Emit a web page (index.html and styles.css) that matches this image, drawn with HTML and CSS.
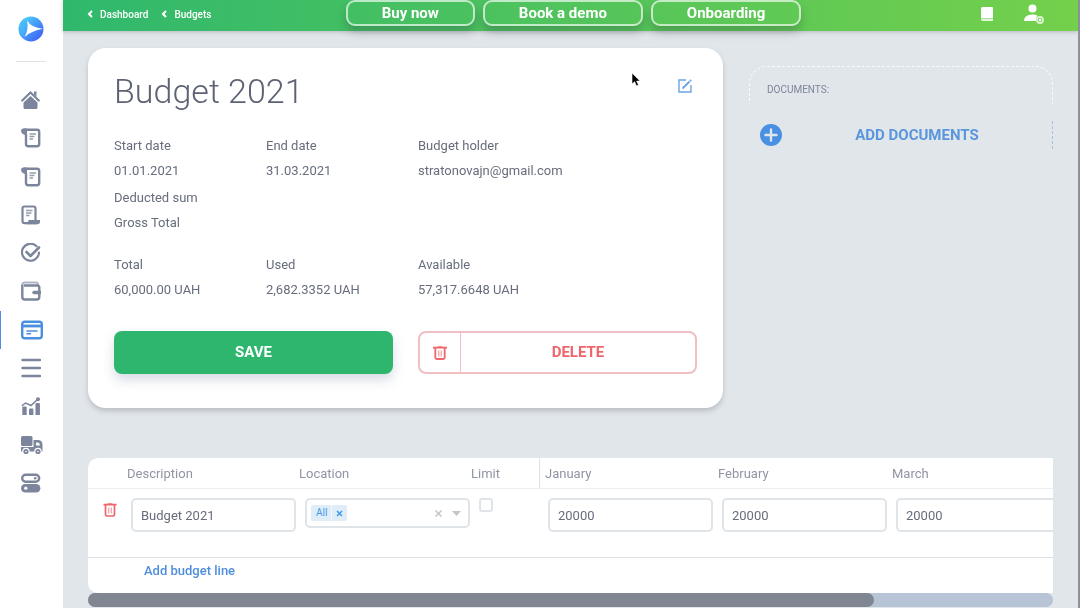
FILE: index.html
```html
<!DOCTYPE html>
<html lang="en">
<head>
  <meta charset="UTF-8" />
  <meta name="viewport" content="width=device-width, initial-scale=1.0"/>
  <title>Budget 2021</title>
  <link rel="stylesheet" href="styles.css">
</head>
<body>

<aside class="sidebar">
  <a href="#" class="logo" aria-label="Home page">
    <svg width="26" height="26" viewBox="0 0 26 26">
      <defs>
        <linearGradient id="logoFill" x1="0" y1="0" x2="1" y2="1">
          <stop offset="0.2" stop-color="#4cc6fb"/>
          <stop offset="0.8" stop-color="#3f6df6"/>
        </linearGradient>
      </defs>
      <circle cx="13" cy="13" r="12.5" fill="url(#logoFill)"/>
      <path d="M9 4.500L6 21L1.500 18Q-1 9 5 3.500z" fill="#45b4fa" opacity=".5"/>
      <path d="M9 4.500Q13 11.500 25 12.800Q13 15 6.500 21Q11 13 9 4.500z" fill="#fff"/>
    </svg>
  </a>

  <nav class="side-nav">
    <a href="#" aria-label="Dashboard">
      <svg width="20" height="20" viewBox="0 0 20 20">
        <path d="M1.200 10.500L9.500 2.500l8.300 8" fill="none" stroke="currentColor" stroke-width="2.200" stroke-linecap="round"/>
        <path d="M13 1.500h2.500v5L13 4.500zM9.500 6l7 6.500v5q0 1.500-1.500 1.500H4q-1.500 0-1.500-1.500v-5z" fill="currentColor"/>
      </svg>
    </a>
    <a href="#" aria-label="Requests">
      <svg width="20" height="20" viewBox="0 0 20 20" fill="none" stroke="currentColor">
        <path d="M2.500 1.800h13.500q2.200 0 2.200 2.200v12q0 2.200-2.200 2.200H7.200Q5 18.200 5 16V6" stroke-width="2.400"/>
        <path d="M0 3Q0 .6 2.500.6H6V7H3.800L.8 5.200z" fill="currentColor" stroke="none"/>
        <path d="M8.500 6h6.500M8.500 8.500h5M8.500 11h3.500" stroke-width="1.300" opacity=".8"/>
      </svg>
    </a>
    <a href="#" aria-label="Orders">
      <svg width="20" height="20" viewBox="0 0 20 20" fill="none" stroke="currentColor">
        <path d="M2.500 1.800h13.500q2.200 0 2.200 2.200v12q0 2.200-2.200 2.200H7.200Q5 18.200 5 16V6" stroke-width="2.400"/>
        <path d="M0 3Q0 .6 2.500.6H6V7H3.800L.8 5.200z" fill="currentColor" stroke="none"/>
        <path d="M8.500 6h6.500M8.500 8.500h5M8.500 11h3.500" stroke-width="1.300" opacity=".8"/>
      </svg>
    </a>
    <a href="#" aria-label="Invoices">
      <svg width="20" height="20" viewBox="0 0 20 20" fill="none" stroke="currentColor">
        <path d="M14.500 15V3.500Q14.500 1.500 12.500 1.500H3.500q-2 0-2 2v12.500q0 2.200 2.200 2.200H16" stroke-width="2.200"/>
        <path d="M7.500 15H19v1.500q0 2.800-2.500 2.800H5.500q2-1 2-4.300z" fill="currentColor" stroke="none"/>
        <path d="M5 5.500h6.500M5 8h5.500M5 10.500h3.500" stroke-width="1.300" opacity=".8"/>
      </svg>
    </a>
    <a href="#" aria-label="Approvals">
      <svg width="20" height="20" viewBox="0 0 20 20" fill="none" stroke="currentColor" stroke-linecap="round" stroke-linejoin="round">
        <path d="M15.500 3.200A8.500 8.500 0 1 0 18 9.500" stroke-width="2.200"/>
        <path d="M5.500 9l4 4 8.500-8.500" stroke-width="2.600"/>
      </svg>
    </a>
    <a href="#" aria-label="Wallet">
      <svg width="20" height="20" viewBox="0 0 20 20" fill="none" stroke="currentColor">
        <path d="M1.300 3.500v12.500q0 2.500 2.500 2.500h12q2.500 0 2.500-2.500V6.500q0-2-2-2H3" stroke-width="2.400"/>
        <path d="M1.500 3.500Q1.500 1.500 4 1.500h11.500q1.500 0 1.500 2.500" stroke-width="2" opacity=".6"/>
        <path d="M13 11.500h6" stroke-width="3.500" stroke-linecap="round"/>
      </svg>
    </a>
    <a href="#" class="active" aria-label="Budgets">
      <svg width="22" height="20" viewBox="0 0 22 20" fill="none" stroke="currentColor">
        <rect x="1.200" y="1.700" width="19.600" height="16.600" rx="2.500" stroke-width="2.400"/>
        <path d="M1 6h20" stroke-width="2.800"/>
        <path d="M6 11h10M6 13.800h3.500" stroke-width="1.600" stroke-linecap="round"/>
      </svg>
    </a>
    <a href="#" aria-label="Lists">
      <svg width="20" height="20" viewBox="0 0 20 20" fill="none" stroke="currentColor" stroke-width="2.400" stroke-linecap="round">
        <path d="M1.500 2h17.500M1.500 10h17.500M1.500 18h17.500"/>
      </svg>
    </a>
    <a href="#" aria-label="Analytics">
      <svg width="20" height="20" viewBox="0 0 20 20">
        <path d="M1.300 11.500q0-1 1-1h2.400q1 0 1 1V19H1.300zM8 13.500q0-1 1-1h2.400q1 0 1 1V19H8zM14.500 8q0-1 1-1h2.400q1 0 1 1v11h-4.400z" fill="currentColor"/>
        <path d="M.8 9.800L4.500 7l5.500 2.500L17 3" fill="none" stroke="currentColor" stroke-width="1.500"/>
        <circle cx="17" cy="3.300" r="2" fill="currentColor"/>
      </svg>
    </a>
    <a href="#" aria-label="Suppliers">
      <svg width="22" height="20" viewBox="0 0 22 20">
        <rect x="0" y="1" width="11.500" height="10" rx="1.500" fill="currentColor"/>
        <path d="M0 12h12.500V5h4.300q4.700 0 4.700 5v6.500H0z" fill="currentColor"/>
        <path d="M15 7.500h2q2 .5 2 3h-4z" fill="#fff"/>
        <g fill="currentColor" stroke="#fff" stroke-width="1.200">
          <circle cx="5" cy="16.500" r="3.200"/>
          <circle cx="17" cy="16.500" r="3.200"/>
        </g>
        <g fill="#fff"><circle cx="5" cy="16.500" r=".8"/><circle cx="17" cy="16.500" r=".8"/></g>
      </svg>
    </a>
    <a href="#" aria-label="Settings">
      <svg width="20" height="20" viewBox="0 0 20 20">
        <rect x="1.200" y="1.700" width="17" height="7" rx="3.500" fill="none" stroke="currentColor" stroke-width="2.400"/>
        <circle cx="14.200" cy="5.200" r="1.300" fill="currentColor"/>
        <rect x="0" y="11" width="19.400" height="8.600" rx="4.300" fill="currentColor"/>
        <circle cx="4.800" cy="15.200" r="1.600" fill="#fff"/>
      </svg>
    </a>
  </nav>
</aside>

<div class="page">
  <header class="topbar">
    <nav class="breadcrumbs">
      <a href="#"><svg width="6" height="8" viewBox="0 0 6 8"><path d="M5 1L2 4l3 3" /></svg>Dashboard</a>
      <a href="#"><svg width="6" height="8" viewBox="0 0 6 8"><path d="M5 1L2 4l3 3" /></svg>Budgets</a>
    </nav>
    <div class="promo">
      <button type="button">Buy now</button>
      <button type="button">Book a demo</button>
      <button type="button">Onboarding</button>
    </div>
    <div class="tools">
      <a href="#" aria-label="Guide">
        <svg width="14" height="16" viewBox="0 0 14 16">
          <path d="M2.500 1H12q1 0 1 1v10H2.500Q1 12 1 13V2.500Q1 1 2.500 1z" fill="#fff"/>
          <path d="M13 12.500V15H2.500Q1 15 1 13.300q0-.8 1.500-.8z" fill="#fff" opacity=".8"/>
        </svg>
      </a>
      <a href="#" aria-label="Profile">
        <svg width="20" height="20" viewBox="0 0 20 20">
          <circle cx="8.500" cy="4.500" r="4" fill="#fff"/>
          <path d="M0 17q0-6.500 8.500-6.500 3.500 0 5 1.200-2 2-1.500 5.300z" fill="#fff"/>
          <circle cx="16" cy="16" r="3" fill="none" stroke="#fff" stroke-width="1.800" opacity=".75"/>
          <circle cx="16" cy="16" r="1.200" fill="#fff"/>
        </svg>
      </a>
    </div>
  </header>

  <main class="content">
    <div class="overview">
      <section class="card">
        <div class="card-head">
          <h1>Budget 2021</h1>
          <button type="button" class="icon-btn edit" aria-label="Edit">
            <svg width="14" height="14" viewBox="0 0 14 14" fill="none" stroke="currentColor">
              <path d="M8 1H1v12h12V6" stroke-width="1.400"/>
              <path d="M4.500 9.500l7-7M12 2l1.200-1.200" stroke-width="1.800"/>
            </svg>
          </button>
        </div>

        <dl class="fields">
          <div><dt>Start date</dt><dd>01.01.2021</dd></div>
          <div><dt>End date</dt><dd>31.03.2021</dd></div>
          <div class="wide"><dt>Budget holder</dt><dd>stratonovajn@gmail.com</dd></div>
        </dl>
        <ul class="sums">
          <li>Deducted sum</li>
          <li>Gross Total</li>
        </ul>
        <dl class="fields">
          <div><dt>Total</dt><dd>60,000.00 UAH</dd></div>
          <div><dt>Used</dt><dd>2,682.3352 UAH</dd></div>
          <div class="wide"><dt>Available</dt><dd>57,317.6648 UAH</dd></div>
        </dl>

        <div class="actions">
          <button type="button" class="btn btn-save">SAVE</button>
          <button type="button" class="btn btn-delete">
            <span class="btn-icon">
              <svg width="14" height="14" viewBox="0 0 14 14" fill="none" stroke="currentColor">
                <path d="M0 1.700h14M4.500 1h5" stroke-width="1.700"/>
                <path d="M2.300 2v9.500q0 1.500 1.500 1.500h6.400q1.500 0 1.500-1.500V2" stroke-width="1.800"/>
                <path d="M5.700 4.500v6M8.300 4.500v6" stroke-width="1.300" opacity=".6"/>
              </svg>
            </span>
            <span class="btn-text">DELETE</span>
          </button>
        </div>
      </section>

      <section class="documents">
        <h2>DOCUMENTS:</h2>
        <button type="button" class="add-docs">
          <svg width="22" height="22" viewBox="0 0 22 22">
            <circle cx="11" cy="11" r="11" fill="#4a90e2"/>
            <path d="M11 5.500v11M5.500 11h11" stroke="#e1e6ea" stroke-width="2.400" stroke-linecap="round"/>
          </svg>
          <span>ADD DOCUMENTS</span>
        </button>
      </section>
    </div>

    <section class="lines">
      <div class="lines-scroll">
        <table>
          <colgroup>
            <col class="col-del"><col class="col-field"><col class="col-field"><col class="col-limit">
            <col class="col-field"><col class="col-field"><col class="col-field"><col>
          </colgroup>
          <thead>
            <tr>
              <td></td>
              <th id="h-desc">Description</th>
              <th id="h-loc" class="tight">Location</th>
              <th id="h-limit" class="flush">Limit</th>
              <th id="h-jan" class="split">January</th>
              <th id="h-feb" class="month">February</th>
              <th id="h-mar" class="month">March</th>
              <td></td>
            </tr>
          </thead>
          <tbody>
            <tr>
              <td class="del">
                <button type="button" class="icon-btn" aria-label="Delete line">
                  <svg width="14" height="14" viewBox="0 0 14 14" fill="none" stroke="currentColor">
                    <path d="M0.500 1.700h13M4.500 1h5" stroke-width="1.700"/>
                    <path d="M2.500 2v9.500q0 1.500 1.500 1.500h6q1.500 0 1.500-1.500V2" stroke-width="1.700"/>
                    <path d="M5.700 4.500v6M8.300 4.500v6" stroke-width="1.300" opacity=".6"/>
                  </svg>
                </button>
              </td>
              <td><input type="text" class="field" value="Budget 2021" aria-labelledby="h-desc"></td>
              <td>
                <div class="multi">
                  <select aria-labelledby="h-loc"><option value=""></option></select>
                  <span class="tag">All<button type="button" aria-label="Remove"><svg width="7" height="7" viewBox="0 0 7 7"><path d="M1 1l5 5M6 1L1 6"/></svg></button></span>
                  <button type="button" class="clear" aria-label="Clear"><svg width="7" height="7" viewBox="0 0 7 7"><path d="M0.500 0.500l6 6M6.500 0.500l-6 6"/></svg></button>
                  <svg class="arrow" width="9" height="5" viewBox="0 0 9 5"><path d="M0 0h9L4.500 5z"/></svg>
                </div>
              </td>
              <td><input type="checkbox" class="check" aria-labelledby="h-limit"></td>
              <td class="month"><input type="text" class="field" value="20000" aria-labelledby="h-jan"></td>
              <td class="month"><input type="text" class="field" value="20000" aria-labelledby="h-feb"></td>
              <td class="month"><input type="text" class="field" value="20000" aria-labelledby="h-mar"></td>
              <td></td>
            </tr>
          </tbody>
          <tfoot>
            <tr>
              <td colspan="8"><button type="button" class="add-line">Add budget line</button></td>
            </tr>
          </tfoot>
        </table>
      </div>
      <div class="track"><div class="thumb"></div></div>
    </section>
  </main>
</div>

<svg class="cursor" width="10" height="15" viewBox="0 0 10 15">
  <path d="M1 1v11l2.600-2.300L5.500 14l2-.9-1.900-4H9z" fill="#000" stroke="#fff" stroke-width=".6"/>
</svg>

</body>
</html>
```
FILE: styles.css
```css
* { box-sizing: border-box; margin: 0; padding: 0; }

body {
  font-family: Roboto, 'Liberation Sans', sans-serif;
  font-size: 13px;
  line-height: 25px;
  color: #676d7c;
  background: #e1e6ea;
  display: flex;
  min-height: 100vh;
  border-right: 2px solid #8b919c;
  overflow: hidden;
}

a { color: inherit; text-decoration: none; }

button {
  font: inherit;
  color: inherit;
  background: none;
  border: none;
  cursor: pointer;
}

svg { display: block; }

/* sidebar */
.sidebar {
  flex: 0 0 63px;
  background: #fff;
}

.logo {
  display: flex;
  justify-content: center;
  margin: 0 17px 19px 16px;
  padding: 16px 0 19px;
  border-bottom: 1px solid #dfe2e6;
}

.side-nav {
  display: flex;
  flex-direction: column;
  justify-content: space-between;
  height: 421px;
  color: #7c859b;
}

.side-nav a {
  display: flex;
  align-items: center;
  height: 38px;
  padding-left: 20px;
  border-left: 1px solid transparent;
}

.side-nav .active {
  color: #4a90e2;
  border-color: #4a90e2;
}

/* top bar */
.page {
  flex: 1;
  min-width: 0;
}

.topbar {
  display: grid;
  grid-template-columns: 1fr auto 1fr;
  height: 31px;
  padding: 0 18px 0 24px;
  background: linear-gradient(to right, #2fb86d, #74d04b);
  box-shadow: 0 1px 4px rgba(60, 60, 70, 0.25);
  color: #fff;
}

.breadcrumbs {
  display: flex;
  align-items: center;
  gap: 13px;
  height: 28px;
  font-size: 10px;
  font-weight: 500;
}

.breadcrumbs a {
  display: flex;
  align-items: center;
  gap: 7px;
}

.breadcrumbs path {
  fill: none;
  stroke: #fff;
  stroke-width: 2;
}

.promo {
  display: flex;
  gap: 8px;
}

.promo button {
  height: 26px;
  padding: 0 34px;
  border: 2px solid rgba(255, 255, 255, 0.65);
  border-radius: 9px;
  box-shadow: 0 6px 10px rgba(40, 40, 60, 0.25);
  font-size: 15px;
  font-weight: 700;
  line-height: 21px;
}

.tools {
  display: flex;
  align-items: center;
  justify-content: flex-end;
  gap: 30px;
  height: 28px;
  padding-right: 16px;
}

/* content */
.content { padding: 17px 25px 0; }

.overview {
  display: grid;
  grid-template-columns: 635fr 304fr;
  align-items: start;
  gap: 26px;
  margin-bottom: 50px;
}

.card {
  padding: 18px 26px 34px;
  background: #fff;
  border-radius: 18px;
  box-shadow: 0 3px 5px rgba(70, 75, 90, 0.25);
}

.card-head {
  display: flex;
  justify-content: space-between;
  margin-bottom: 17px;
}

h1 {
  font-size: 34px;
  font-weight: 300;
  line-height: 50px;
  color: #5d6373;
}

.icon-btn { display: block; }

.edit {
  align-self: flex-start;
  margin: 13px 5px 0 0;
  color: #6ea3e4;
}

.fields {
  display: grid;
  grid-template-columns: repeat(4, 1fr);
  gap: 25px;
}

.fields .wide { grid-column: span 2; }

.sums {
  list-style: none;
  margin: 2px 0 17px;
}

.actions {
  display: grid;
  grid-template-columns: 1fr 1fr;
  gap: 25px;
  margin-top: 29px;
}

.btn {
  height: 43px;
  border-radius: 8px;
  font-size: 15px;
  font-weight: 700;
}

.btn-save {
  background: #2fb66e;
  color: #fff;
  box-shadow: 0 6px 12px rgba(120, 140, 165, 0.3);
}

.btn-delete {
  display: flex;
  border: 2px solid #efbfc3;
  color: #ee666b;
}

.btn-icon {
  display: flex;
  align-items: center;
  justify-content: center;
  width: 41px;
  height: 100%;
  border-right: 1px solid #efbfc3;
}

.btn-text {
  flex: 1;
  align-self: center;
}

/* documents */
.documents { padding-top: 18px; }

.documents h2 {
  height: 38px;
  padding: 10px 17px 0;
  border: 1px dashed #f8fafb;
  border-bottom: none;
  border-radius: 18px 18px 0 0;
  font-size: 10px;
  font-weight: 400;
  color: #7c859b;
}

.add-docs {
  display: flex;
  align-items: center;
  width: 100%;
  height: 28px;
  margin-top: 17px;
  padding-left: 11px;
  border-right: 1px dashed #a9c0de;
  font-size: 15px;
  font-weight: 700;
  color: #5a96dd;
}

.add-docs span { flex: 1; }

/* budget lines */
.lines-scroll {
  overflow-x: auto;
  scrollbar-width: none;
  background: #fff;
  border-radius: 10px 0 0 10px;
}

table {
  width: 1184px;
  table-layout: fixed;
  border-collapse: separate;
  border-spacing: 0;
}

.col-del { width: 35px; }
.col-field { width: 174px; }
.col-limit { width: 68px; }

th, thead td {
  height: 31px;
  border-bottom: 1px solid #eceff2;
}

th {
  padding-left: 4px;
  text-align: left;
  font-weight: 400;
  color: #9095a3;
}

th.tight { padding-left: 2px; }
th.flush { padding-left: 0; }
th.month { padding-left: 5px; }

th.split {
  border-left: 1px solid #dde1e6;
  padding-left: 5px;
}

tbody td {
  height: 68px;
  padding: 9px 1px 0 8px;
  vertical-align: top;
}

tbody .del {
  padding: 14px 0 0 15px;
  color: #ee666b;
}

tbody .month { padding: 9px 0 0 9px; }

.field {
  display: block;
  width: 100%;
  height: 34px;
  padding: 0 8px;
  border: 2px solid #dfe4e9;
  border-radius: 5px;
  font: inherit;
  color: #676d7c;
}

.multi { position: relative; }

.multi select {
  display: block;
  width: 100%;
  height: 30px;
  appearance: none;
  background: #fff;
  border: 2px solid #dfe4e9;
  border-radius: 5px;
}

.tag {
  position: absolute;
  top: 7px;
  left: 6px;
  display: flex;
  height: 16px;
  padding-left: 5px;
  background: #dfedf9;
  border-radius: 2px;
  font-size: 10px;
  line-height: 16px;
  color: #3f9ae8;
}

.tag button {
  margin-left: 4px;
  padding: 0 4px;
  border-left: 1px solid #f1f7fd;
}

.tag path, .clear path {
  fill: none;
  stroke: #3f9ae8;
  stroke-width: 1.5;
}

.clear {
  position: absolute;
  top: 12px;
  right: 28px;
}

.clear path { stroke: #c0c4cb; }

.arrow {
  position: absolute;
  top: 13px;
  right: 9px;
  fill: #c3c6cc;
  pointer-events: none;
}

.check {
  display: block;
  width: 14px;
  height: 14px;
  appearance: none;
  border: 2px solid #dfe4e9;
  border-radius: 3px;
}

tfoot td {
  height: 35px;
  padding: 0 56px 10px;
  border-top: 1px solid #dde1e6;
}

.add-line {
  display: block;
  font-weight: 500;
  color: #4f8edc;
}

.track {
  height: 14px;
  border-radius: 7px;
  background: #b6c4d6;
}

.thumb {
  width: 81.5%;
  height: 100%;
  border-radius: 7px;
  background: #808692;
}

/* pointer over the card */
.cursor {
  position: absolute;
  top: 72px;
  left: 631px;
  pointer-events: none;
}
```
